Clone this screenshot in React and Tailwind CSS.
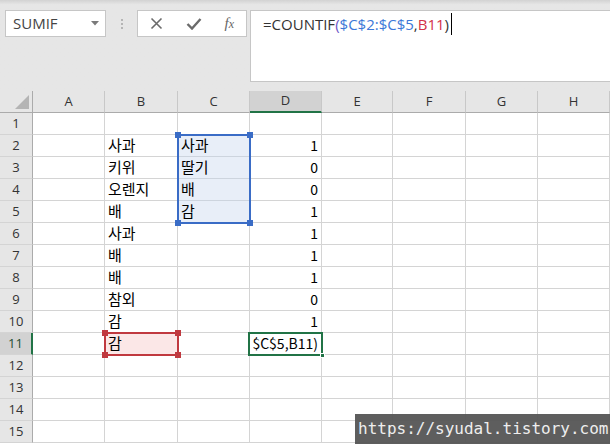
import React from 'react';

const cols = ['A', 'B', 'C', 'D', 'E', 'F', 'G', 'H'];

// [B, C, D] for rows 1..15
const data = [
  ['', '', ''],
  ['사과', '사과', '1'],
  ['키위', '딸기', '0'],
  ['오렌지', '배', '0'],
  ['배', '감', '1'],
  ['사과', '', '1'],
  ['배', '', '1'],
  ['배', '', '1'],
  ['참외', '', '0'],
  ['감', '', '1'],
  ['감', '', '$C$5,B11)'],
  ['', '', ''],
  ['', '', ''],
  ['', '', ''],
  ['', '', ''],
];

const cellFont = { fontFamily: '"Noto Sans CJK KR", "Noto Sans", sans-serif' };
const uiFont = { fontFamily: '"Open Sans", sans-serif' };

function Handle({ className }) {
  return <div className={`absolute w-[6px] h-[6px] ${className}`} />;
}

function Toolbar() {
  return (
    <div className="h-[91px] bg-[#e6e6e6] bg-gradient-to-b from-[#d2d2d2] from-0% to-[#e6e6e6] to-[5%] flex items-start pt-[10px] pl-[5px]">
      {/* name box */}
      <div className="w-[101px] h-[27px] bg-white border border-[#c6c6c6] flex items-center pl-[7px] pr-[6px]">
        <span className="flex-1 text-[15px] text-[#444]" style={uiFont}>SUMIF</span>
        <svg width="8" height="5" viewBox="0 0 8 5"><path d="M0 0h8L4 4.5z" fill="#7a7a7a" /></svg>
      </div>
      {/* dots */}
      <div className="w-[31px] h-[27px] flex flex-col items-center justify-center gap-[2px]">
        <div className="w-[2px] h-[2px] bg-[#b5b5b5]" />
        <div className="w-[2px] h-[2px] bg-[#b5b5b5]" />
        <div className="w-[2px] h-[2px] bg-[#b5b5b5]" />
      </div>
      {/* icon box */}
      <div className="w-[110px] h-[27px] bg-white border border-[#c6c6c6] flex items-center justify-between px-[12px]">
        <svg width="13" height="13" viewBox="0 0 13 13"><path d="M1.5 1.5l10 10M11.5 1.5l-10 10" stroke="#6b6b6b" strokeWidth="1.6" /></svg>
        <svg width="16" height="13" viewBox="0 0 16 13"><path d="M1.5 7l4.5 4.5L14.5 2" stroke="#6b6b6b" strokeWidth="2.4" fill="none" /></svg>
        <span className="text-[15px] italic text-[#666]" style={{ fontFamily: '"Liberation Serif", serif' }}>
          f<span className="text-[12px]">x</span>
        </span>
      </div>
      {/* formula input */}
      <div className="flex-1 ml-[3px] mr-[-2px] h-[72px] bg-white border border-[#c6c6c6] pl-[12px] pt-[2px]">
        <div className="flex items-center text-[15px] leading-[22px] text-[#333]" style={uiFont}>
          <span>=COUNTIF</span>
          <span className="text-[#6b56c8]">(</span>
          <span className="text-[#3c78d8]">$C$2:$C$5</span>
          <span>,</span>
          <span className="text-[#d3314a]">B11</span>
          <span>)</span>
          <span className="ml-[2px] w-[1px] h-[22px] bg-black" />
        </div>
      </div>
    </div>
  );
}

function Sheet() {
  return (
    <div className="relative">
      <div className="grid grid-cols-[33px_72px_73px_72px_72px_71px_73px_72px_72px]" style={cellFont}>
        {/* header row */}
        <div className="h-[22px] bg-[#e6e6e6] border-b border-r border-[#ababab] flex items-end justify-end pr-[3px] pb-[3px]">
          <svg width="14" height="14" viewBox="0 0 14 14"><path d="M14 0V14H0z" fill="#b4b4b4" /></svg>
        </div>
        {cols.map((c) => (
          <div
            key={c}
            className={`h-[22px] flex items-center justify-center text-[13px] text-[#333] border-r border-[#c8c8c8] ${
              c === 'D' ? 'bg-[#d2d2d2] border-b-2 border-b-[#217346]' : 'bg-[#e6e6e6] border-b border-b-[#ababab]'
            }`}
            style={uiFont}
          >
            {c}
          </div>
        ))}
        {data.map((r, i) => {
          const n = i + 1;
          const inC = n >= 2 && n <= 5;
          return (
            <React.Fragment key={n}>
              <div
                className={`h-[22px] flex items-center justify-center text-[13px] border-b border-[#d4d4d4] ${
                  n === 11 ? 'bg-[#d2d2d2] border-r-2 border-r-[#217346] text-[#1f4e33]' : 'bg-[#e6e6e6] border-r border-r-[#ababab] text-[#333]'
                }`}
                style={uiFont}
              >
                {n}
              </div>
              <div className="h-[22px] border-b border-r border-[#d4d4d4] bg-white" />
              <div className={`h-[22px] border-b border-r border-[#d4d4d4] flex items-center pl-[3px] text-[15px] text-black ${n === 11 ? 'bg-[#fbe7e7]' : 'bg-white'}`}>
                {r[0]}
              </div>
              <div className={`h-[22px] border-b border-r flex items-center pl-[3px] text-[15px] text-black ${inC ? 'bg-[#e8eef8] border-[#cdd4de]' : 'bg-white border-[#d4d4d4]'}`}>
                {r[1]}
              </div>
              <div className="h-[22px] border-b border-r border-[#d4d4d4] bg-white flex items-center justify-end pr-[3px] text-[14px] text-black overflow-hidden whitespace-nowrap">
                {r[2]}
              </div>
              {cols.slice(4).map((c) => (
                <div key={c} className="h-[22px] border-b border-r border-[#d4d4d4] bg-white" />
              ))}
            </React.Fragment>
          );
        })}
      </div>

      {/* C2:C5 reference range */}
      <div className="absolute left-[177px] top-[43px] w-[74px] h-[90px] border-2 border-[#3a6cc6] pointer-events-none">
        <Handle className="left-[-4px] top-[-4px] bg-[#3a6cc6]" />
        <Handle className="right-[-4px] top-[-4px] bg-[#3a6cc6]" />
        <Handle className="left-[-4px] bottom-[-4px] bg-[#3a6cc6]" />
        <Handle className="right-[-4px] bottom-[-4px] bg-[#3a6cc6]" />
      </div>
      {/* B11 reference */}
      <div className="absolute left-[104px] top-[241px] w-[75px] h-[24px] border-2 border-[#c0393f] pointer-events-none">
        <Handle className="left-[-4px] top-[-4px] bg-[#c0393f]" />
        <Handle className="right-[-4px] top-[-4px] bg-[#c0393f]" />
        <Handle className="left-[-4px] bottom-[-4px] bg-[#c0393f]" />
        <Handle className="right-[-4px] bottom-[-4px] bg-[#c0393f]" />
      </div>
      {/* active cell D11 */}
      <div className="absolute left-[248px] top-[241px] w-[75px] h-[24px] border-2 border-[#217346] pointer-events-none">
        <div className="absolute right-[-4px] bottom-[-4px] w-[5px] h-[5px] bg-[#217346] border border-white" />
      </div>

      {/* watermark */}
      <div className="absolute left-[355px] top-[323px] w-[255px] h-[30px] bg-[#555555]/95 flex items-center pl-[3px]">
        <span className="text-[16px] text-[#eeeeee] whitespace-nowrap" style={{ fontFamily: '"DejaVu Sans Mono", monospace' }}>
          https://syudal.tistory.com
        </span>
      </div>
    </div>
  );
}

export default function App() {
  return (
    <div className="w-[610px] h-[444px] overflow-hidden bg-white">
      <Toolbar />
      <Sheet />
    </div>
  );
}
